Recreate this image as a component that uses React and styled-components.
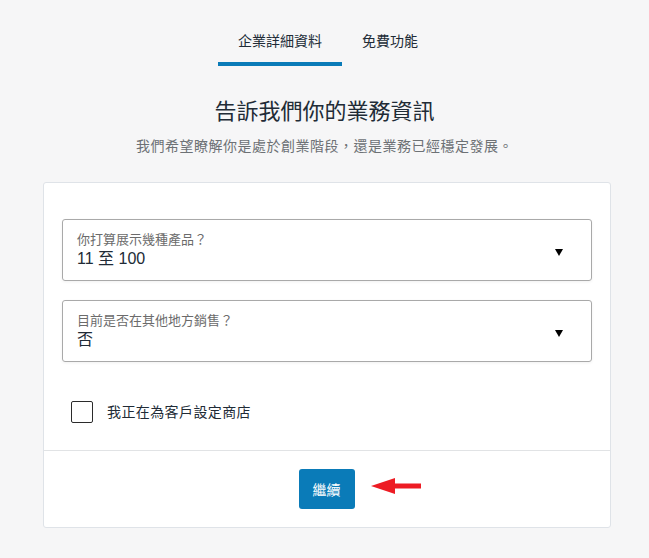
import React, { useState } from 'react';
import styled, { createGlobalStyle } from 'styled-components';

const GlobalStyle = createGlobalStyle`
  html, body {
    margin: 0;
    padding: 0;
    background: #f6f6f7;
  }
  body {
    font-family: "Liberation Sans", "Noto Sans CJK TC", sans-serif;
    color: #212b36;
  }
`;

const Page = styled.div`
  display: flex;
  flex-direction: column;
  align-items: center;
  min-height: 558px;
  box-sizing: border-box;
`;

const Tabs = styled.nav`
  display: flex;
  margin-left: 7px;
`;

const Tab = styled.button`
  font-family: inherit;
  font-size: 14px;
  line-height: 20px;
  color: #212b36;
  background: none;
  border: 0;
  border-bottom: 4px solid ${(p) => (p.$active ? '#0a7bb8' : 'transparent')};
  padding: 31px 20px 11px;
  cursor: pointer;
`;

const Heading = styled.h1`
  margin: 31px 0 0;
  font-size: 22px;
  line-height: 30px;
  font-weight: 400;
  color: #212b36;
`;

const Subtitle = styled.p`
  margin: 9px 0 0;
  font-size: 14px;
  line-height: 20px;
  letter-spacing: 0.5px;
  color: #6d7175;
`;

const Card = styled.section`
  margin: 26px 0 30px 5px;
  width: 568px;
  box-sizing: border-box;
  background: #fff;
  border: 1px solid #dfe3e8;
  border-radius: 3px;
`;

const CardBody = styled.div`
  display: flex;
  flex-direction: column;
  gap: 19px;
  padding: 36px 18px 27px;
`;

const SelectBox = styled.label`
  position: relative;
  display: flex;
  flex-direction: column;
  height: 62px;
  box-sizing: border-box;
  padding: 11px 40px 0 14px;
  border: 1px solid #a9a9a9;
  border-radius: 3px;
  box-shadow: 0 1px 3px rgba(0, 0, 0, 0.06);
  cursor: pointer;
`;

const SelectLabel = styled.span`
  font-size: 13px;
  line-height: 17px;
  color: #6b6b6b;
`;

const SelectValue = styled.span`
  font-size: 16px;
  line-height: 22px;
  color: #212b36;
`;

const Caret = styled.span`
  position: absolute;
  right: 28px;
  top: 29px;
  width: 0;
  height: 0;
  border-left: 4.5px solid transparent;
  border-right: 4.5px solid transparent;
  border-top: 7px solid #000;
`;

const CheckRow = styled.label`
  display: flex;
  align-items: center;
  gap: 14px;
  margin-top: 20px;
  padding-left: 9px;
  font-size: 14px;
  line-height: 20px;
  letter-spacing: 0.4px;
  color: #212b36;
  cursor: pointer;
`;

const Box = styled.span`
  width: 22px;
  height: 22px;
  box-sizing: border-box;
  border: 1px solid #2b2b2b;
  border-radius: 2px;
  background: ${(p) => (p.$checked ? '#0a7bb8' : '#fff')};
`;

const CardFooter = styled.div`
  display: flex;
  justify-content: center;
  padding: 18px 0;
  border-top: 1px solid #e1e3e5;
`;

const ButtonWrap = styled.div`
  position: relative;
  margin-left: -1px;
`;

const PrimaryButton = styled.button`
  width: 56px;
  height: 40px;
  border: 0;
  border-radius: 3px;
  background: #0a7bb8;
  color: #fff;
  font-family: inherit;
  font-size: 14px;
  cursor: pointer;
`;

const Pointer = styled.svg`
  position: absolute;
  left: calc(100% + 16px);
  top: 8px;
`;

const selects = [
  { label: '你打算展示幾種產品？', value: '11 至 100' },
  { label: '目前是否在其他地方銷售？', value: '否' },
];

export default function App() {
  const [tab, setTab] = useState(0);
  const [checked, setChecked] = useState(false);

  return (
    <>
      <GlobalStyle />
      <Page>
        <Tabs>
          <Tab $active={tab === 0} onClick={() => setTab(0)}>企業詳細資料</Tab>
          <Tab $active={tab === 1} onClick={() => setTab(1)}>免費功能</Tab>
        </Tabs>
        <Heading>告訴我們你的業務資訊</Heading>
        <Subtitle>我們希望瞭解你是處於創業階段，還是業務已經穩定發展。</Subtitle>
        <Card>
          <CardBody>
            {selects.map((s) => (
              <SelectBox key={s.label}>
                <SelectLabel>{s.label}</SelectLabel>
                <SelectValue>{s.value}</SelectValue>
                <Caret />
              </SelectBox>
            ))}
            <CheckRow onClick={() => setChecked(!checked)}>
              <Box $checked={checked} />
              我正在為客戶設定商店
            </CheckRow>
          </CardBody>
          <CardFooter>
            <ButtonWrap>
              <PrimaryButton>繼續</PrimaryButton>
              <Pointer width="50" height="18" viewBox="0 0 50 18">
                <polygon points="0,9 24,1 24,6.5 50,6.5 50,11.5 24,11.5 24,17" fill="#ed1c24" />
              </Pointer>
            </ButtonWrap>
          </CardFooter>
        </Card>
      </Page>
    </>
  );
}
